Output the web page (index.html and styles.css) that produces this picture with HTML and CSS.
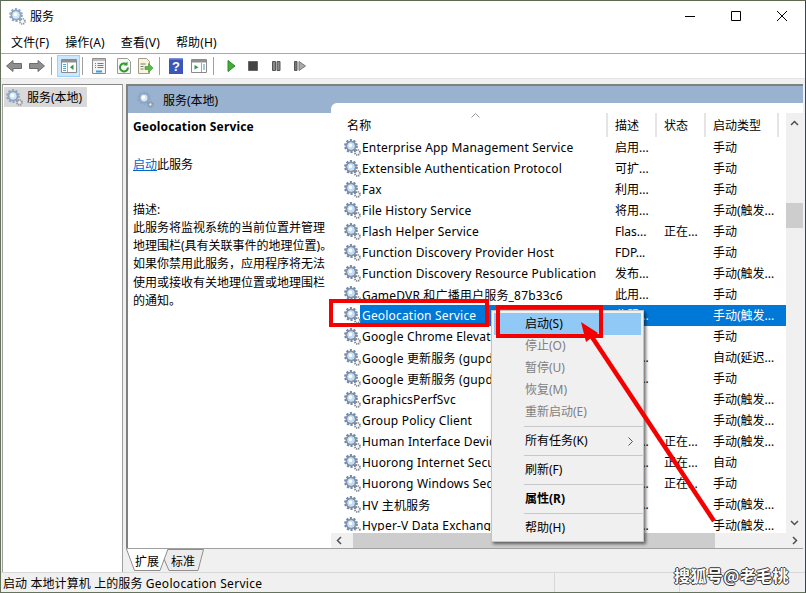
FILE: index.html
```html
<!DOCTYPE html>
<html lang="zh-CN">
<head>
<meta charset="utf-8">
<title>服务</title>
<link rel="stylesheet" href="styles.css">
</head>
<body>
<svg class="defs" width="0" height="0" aria-hidden="true">
  <symbol id="gear" viewBox="0 0 17 17">
    <circle cx="7" cy="7" r="5.6" fill="none" stroke="#6f85a2" stroke-width="2.6" stroke-dasharray="2 1.52"/>
    <circle cx="7" cy="7" r="4.5" fill="none" stroke="#7d94b1" stroke-width="2"/>
    <circle cx="7" cy="7" r="3.4" fill="#c9dcee"/>
    <circle cx="6.4" cy="6.4" r="1.8" fill="#fff"/>
    <circle cx="13.4" cy="13.4" r="2.5" fill="none" stroke="#7d848c" stroke-width="1.9" stroke-dasharray="1.2 .76"/>
    <circle cx="13.4" cy="13.4" r="1" fill="#eef1f4"/>
  </symbol>
  <symbol id="gearlight" viewBox="0 0 17 17">
    <circle cx="7" cy="7" r="5.6" fill="none" stroke="#8fa8c4" stroke-width="2.6" stroke-dasharray="2 1.52"/>
    <circle cx="7" cy="7" r="4.5" fill="none" stroke="#8aa6c4" stroke-width="2"/>
    <circle cx="7" cy="7" r="3.4" fill="#d5e5f3"/>
    <circle cx="6.4" cy="6.4" r="1.8" fill="#fff"/>
    <circle cx="13.4" cy="13.4" r="2.5" fill="none" stroke="#8f969e" stroke-width="1.9" stroke-dasharray="1.2 .76"/>
    <circle cx="13.4" cy="13.4" r="1" fill="#eef1f4"/>
  </symbol>
</svg>
<div class="window">
  <header class="titlebar">
    <svg class="title-icon"><use href="#gearlight"/></svg>
    <span class="title-text">服务</span>
    <div class="win-buttons">
      <svg width="12" height="12" viewBox="0 0 12 12"><path d="M1 6.500h10" stroke="#000" fill="none"/></svg>
      <svg width="12" height="12" viewBox="0 0 12 12"><path d="M1.500 1.500h9v9h-9z" stroke="#000" fill="none"/></svg>
      <svg width="12" height="12" viewBox="0 0 12 12"><path d="M1 1l10 10M11 1L1 11" stroke="#000" fill="none"/></svg>
    </div>
  </header>
  <nav class="menubar">
    <span>文件(F)</span><span>操作(A)</span><span>查看(V)</span><span>帮助(H)</span>
  </nav>
  <div class="toolbar">
    <svg class="t16" viewBox="0 0 16 16"><path d="M.5 8L7 2.500V5.500H15.500V10.500H7V13.500Z" fill="#8f8f8f" stroke="#6d6d6d"/></svg>
    <svg class="t16 tg7" viewBox="0 0 16 16"><path d="M15.500 8L9 2.500V5.500H.5V10.500H9V13.500Z" fill="#8f8f8f" stroke="#6d6d6d"/></svg>
    <i class="tsep s6"></i>
    <span class="tactive"><svg class="t16" viewBox="0 0 16 16"><path d="M.5 1.500h15v13H.5z" fill="#fff" stroke="#8a8a8a"/><path d="M1 2h14v2.500H1z" fill="#8f8f8f"/><path d="M2 6.500h3M2 8.500h3M2 10.500h3M2 12.500h3" stroke="#5fa0c8"/><path d="M6.500 5v9" stroke="#aaa"/><path d="M12.500 6.500v5.500l-3.500-2.750z" fill="#2d9a3e"/></svg></span>
    <i class="tsep s2"></i>
    <svg class="t16 tg8" viewBox="0 0 16 16"><path d="M1.500 .5h13v15h-13z" fill="#f4f4f4" stroke="#8c8c8c"/><path d="M2 1h12v2H2z" fill="#bbb"/><path d="M4 5.500h1M4 7.500h1M4 9.500h1M6.500 5.500h6M6.500 7.500h6M6.500 9.500h6" stroke="#6e7f90"/><path d="M5 13.500h6" stroke="#3aa0dc" stroke-width="2"/></svg>
    <svg class="t16 tg9" viewBox="0 0 16 16"><path d="M1.500 .5h10l3 3v12h-13z" fill="#f7f7f4" stroke="#9a9a9a"/><path d="M12 9.500a4 4 0 1 1-1.300-3" fill="none" stroke="#2f9b32" stroke-width="2"/><path d="M11.500 3.500v4h-4z" fill="#2f9b32"/></svg>
    <svg class="t16 tg5" viewBox="0 0 16 16"><path d="M1.500 .5h8l3 3v12h-11z" fill="#f8f4dd" stroke="#a29d86"/><path d="M3.500 6h5M3.500 8.500h3M3.500 11h3" stroke="#777"/><path d="M8 8.500h3.500V5.500L16 10l-4.500 4.500V11.500H8z" fill="#58b947" stroke="#3c8f32" stroke-width=".6"/></svg>
    <i class="tsep s6"></i>
    <svg class="t14 tg9" viewBox="0 0 14 16"><path d="M0 0h14v16H0z" fill="#3b56b8"/><path d="M0 0h14v1.500H0z" fill="#7f91d8"/><text x="7" y="13" font-size="13" font-weight="700" fill="#fff" text-anchor="middle" font-family="Liberation Sans">?</text></svg>
    <svg class="t16 tg8" viewBox="0 0 16 16"><path d="M.5 1.500h15v13H.5z" fill="#fff" stroke="#8a8a8a"/><path d="M1 2h14v2.500H1z" fill="#8f8f8f"/><path d="M10.500 5v9" stroke="#aaa"/><path d="M3.500 7v4.500l4-2.250z" fill="#2d9a3e"/><path d="M12 7h2M12 9h2M12 11h2" stroke="#5a8cc0"/></svg>
    <i class="tsep s6"></i>
    <svg class="t12 tg11" viewBox="0 0 12 16"><path d="M3 2.500L10 8l-7 5.500z" fill="#3fae35" stroke="#2c8a27"/></svg>
    <svg class="t12 tg10" viewBox="0 0 12 16"><path d="M1.500 3.500h9v9h-9z" fill="#444" stroke="#666"/></svg>
    <svg class="t12 tg11" viewBox="0 0 12 16"><path d="M2.500 3.500h3v9h-3zM7 3.500h3v9H7z" fill="#888" stroke="#555"/></svg>
    <svg class="t12 tg12" viewBox="0 0 12 16"><path d="M.5 3.500h2.500v9H.5z" fill="#777" stroke="#555"/><path d="M5 3.500L11.500 8 5 12.500z" fill="#aaa" stroke="#777"/></svg>
  </div>
  <main class="workspace">
    <aside class="tree">
      <div class="tree-item"><svg class="gear"><use href="#gearlight"/></svg><span>服务(本地)</span></div>
    </aside>
    <section class="content">
      <div class="content-frame">
        <div class="band"><svg class="gear"><use href="#gearlight"/></svg><span>服务(本地)</span></div>
        <div class="split">
          <div class="details">
            <h1>Geolocation Service</h1>
            <p class="start"><a href="#">启动</a>此服务</p>
            <p class="desc-label">描述:</p>
            <p class="desc-text">此服务将监视系统的当前位置并管理<br>地理围栏(具有关联事件的地理位置)。<br>如果你禁用此服务，应用程序将无法<br>使用或接收有关地理位置或地理围栏<br>的通知。</p>
          </div>
          <div class="list-area">
            <div class="list-main">
              <div class="table">
                <div class="row head">
                  <span class="c1">名称<svg class="sort" width="9" height="5" viewBox="0 0 9 5"><path d="M.5 4.500l4-4 4 4" fill="none" stroke="#999"/></svg></span>
                  <span class="c2">描述</span><span class="c3">状态</span><span class="c4">启动类型</span><span class="c5"></span>
                </div>
                <div class="rows">
                  <div class="row"><span class="c1"><svg class="gear"><use href="#gear"/></svg>Enterprise App Management Service</span><span class="c2">启用...</span><span class="c3"></span><span class="c4">手动</span></div>
                  <div class="row"><span class="c1"><svg class="gear"><use href="#gear"/></svg>Extensible Authentication Protocol</span><span class="c2">可扩...</span><span class="c3"></span><span class="c4">手动</span></div>
                  <div class="row"><span class="c1"><svg class="gear"><use href="#gear"/></svg>Fax</span><span class="c2">利用...</span><span class="c3"></span><span class="c4">手动</span></div>
                  <div class="row"><span class="c1"><svg class="gear"><use href="#gear"/></svg>File History Service</span><span class="c2">将用...</span><span class="c3"></span><span class="c4">手动(触发...</span></div>
                  <div class="row"><span class="c1"><svg class="gear"><use href="#gear"/></svg>Flash Helper Service</span><span class="c2">Flas...</span><span class="c3">正在...</span><span class="c4">手动</span></div>
                  <div class="row"><span class="c1"><svg class="gear"><use href="#gear"/></svg>Function Discovery Provider Host</span><span class="c2">FDP...</span><span class="c3"></span><span class="c4">手动</span></div>
                  <div class="row"><span class="c1"><svg class="gear"><use href="#gear"/></svg>Function Discovery Resource Publication</span><span class="c2">发布...</span><span class="c3"></span><span class="c4">手动(触发...</span></div>
                  <div class="row"><span class="c1"><svg class="gear"><use href="#gear"/></svg>GameDVR 和广播用户服务_87b33c6</span><span class="c2">此用...</span><span class="c3"></span><span class="c4">手动</span></div>
                  <div class="row selected"><span class="c1"><svg class="gear"><use href="#gear"/></svg>Geolocation Service</span><span class="c2">此服...</span><span class="c3"></span><span class="c4">手动(触发...</span></div>
                  <div class="row"><span class="c1"><svg class="gear"><use href="#gear"/></svg>Google Chrome Elevation Service</span><span class="c2"></span><span class="c3"></span><span class="c4">手动</span></div>
                  <div class="row"><span class="c1"><svg class="gear"><use href="#gear"/></svg>Google 更新服务 (gupdate)</span><span class="c2">请确...</span><span class="c3"></span><span class="c4">自动(延迟...</span></div>
                  <div class="row"><span class="c1"><svg class="gear"><use href="#gear"/></svg>Google 更新服务 (gupdatem)</span><span class="c2">请确...</span><span class="c3"></span><span class="c4">手动</span></div>
                  <div class="row"><span class="c1"><svg class="gear"><use href="#gear"/></svg>GraphicsPerfSvc</span><span class="c2"></span><span class="c3"></span><span class="c4">手动(触发...</span></div>
                  <div class="row"><span class="c1"><svg class="gear"><use href="#gear"/></svg>Group Policy Client</span><span class="c2"></span><span class="c3"></span><span class="c4">手动(触发...</span></div>
                  <div class="row"><span class="c1"><svg class="gear"><use href="#gear"/></svg>Human Interface Device Service</span><span class="c2">激活...</span><span class="c3">正在...</span><span class="c4">手动(触发...</span></div>
                  <div class="row"><span class="c1"><svg class="gear"><use href="#gear"/></svg>Huorong Internet Security</span><span class="c2">火绒...</span><span class="c3">正在...</span><span class="c4">自动</span></div>
                  <div class="row"><span class="c1"><svg class="gear"><use href="#gear"/></svg>Huorong Windows Security</span><span class="c2">火绒...</span><span class="c3">正在...</span><span class="c4">手动</span></div>
                  <div class="row"><span class="c1"><svg class="gear"><use href="#gear"/></svg>HV 主机服务</span><span class="c2">为 H...</span><span class="c3"></span><span class="c4">手动(触发...</span></div>
                  <div class="row"><span class="c1"><svg class="gear"><use href="#gear"/></svg>Hyper-V Data Exchange</span><span class="c2">提供...</span><span class="c3"></span><span class="c4">手动(触发...</span></div>
                </div>
              </div>
              <div class="vscroll">
                <svg width="9" height="6" viewBox="0 0 9 6"><path d="M1 5l3.500-3.500L8 5" fill="none" stroke="#505050" stroke-width="1.500"/></svg>
                <div class="vtrack"><div class="vthumb"></div></div>
                <svg width="9" height="6" viewBox="0 0 9 6"><path d="M1 1l3.500 3.500L8 1" fill="none" stroke="#505050" stroke-width="1.500"/></svg>
              </div>
            </div>
            <div class="hscroll">
              <svg width="6" height="9" viewBox="0 0 6 9"><path d="M5 1L1.500 4.500 5 8" fill="none" stroke="#505050" stroke-width="1.500"/></svg>
              <div class="htrack"><div class="hthumb"></div></div>
              <svg width="6" height="9" viewBox="0 0 6 9"><path d="M1 1l3.500 3.500L1 8" fill="none" stroke="#505050" stroke-width="1.500"/></svg>
            </div>
          </div>
        </div>
      </div>
      <div class="tabs">
        <svg class="tab-shape" width="80" height="23" viewBox="0 0 80 23">
          <path d="M38 10L43 21.500H72L77.500 .5H42" fill="#ececec" stroke="#8e8e8e"/>
          <path d="M.5 0L8.500 21.500H34L42 0" fill="#fff" stroke="#8e8e8e"/>
        </svg>
        <span class="tab tab-a">扩展</span><span class="tab">标准</span>
      </div>
    </section>
  </main>
  <footer class="statusbar"><span>启动 本地计算机 上的服务 <b>Geolocation Service</b></span><i></i><i></i></footer>
</div>

<div class="menu">
  <div class="mi active">启动(S)</div>
  <div class="mi off">停止(O)</div>
  <div class="mi off">暂停(U)</div>
  <div class="mi off">恢复(M)</div>
  <div class="mi off">重新启动(E)</div>
  <hr>
  <div class="mi sub">所有任务(K)<svg width="5" height="9" viewBox="0 0 5 9"><path d="M.5.5l4 4-4 4" fill="none" stroke="#555"/></svg></div>
  <hr>
  <div class="mi">刷新(F)</div>
  <hr>
  <div class="mi strong">属性(R)</div>
  <hr>
  <div class="mi">帮助(H)</div>
</div>

<div class="mark mark-a"></div>
<div class="mark mark-b"></div>
<svg class="pointer" width="806" height="593" viewBox="0 0 806 593">
  <path d="M714 521L590 334" stroke="#f50000" stroke-width="4.500" fill="none"/>
  <path d="M581 322L598 333 586 342Z" fill="#f50000"/>
</svg>
<div class="watermark">搜狐号@老毛桃</div>
</body>
</html>
```
FILE: styles.css
```css
* { box-sizing: border-box; }
html, body { margin: 0; padding: 0; }
body {
  width: 806px; height: 593px; overflow: hidden; position: relative; background: #fff;
  font-family: "Noto Sans", "Noto Sans CJK SC", sans-serif; font-size: 12px; color: #000;
}
.defs { position: absolute; }
.window {
  width: 806px; height: 593px; display: flex; flex-direction: column;
  border: 1px solid #66735c; border-top-color: #5d6a52; border-right-color: #3a4450; background: #f0f0f0;
}
.titlebar { height: 30px; flex: none; background: #fff; display: flex; align-items: center; padding-left: 8px; }
.title-icon { width: 17px; height: 17px; }
.title-text { margin-left: 4px; }
.win-buttons { margin-left: auto; display: flex; gap: 34px; padding-right: 17px; }
.menubar { height: 23px; flex: none; background: #fff; display: flex; align-items: center; gap: 16px; padding-left: 10px; border-bottom: 1px solid #a8a8a8; letter-spacing: .15px; }
.toolbar { height: 24px; flex: none; background: #fff; display: flex; align-items: center; padding-left: 5px; }
.t16 { width: 16px; height: 16px; flex: none; }
.t14 { width: 14px; height: 16px; flex: none; }
.t12 { width: 12px; height: 16px; flex: none; }
.tg5 { margin-left: 5px; }
.tg7 { margin-left: 7px; }
.tg8 { margin-left: 8px; }
.tg9 { margin-left: 9px; }
.tg10 { margin-left: 10px; }
.tg11 { margin-left: 11px; }
.tg12 { margin-left: 12px; }
.tsep { width: 1px; height: 18px; background: #a0a0a0; flex: none; }
.s6 { margin-left: 6px; }
.s2 { margin-left: 2px; }
.tactive { width: 23px; height: 22px; margin-left: 5px; background: #cce8ff; border: 1px solid #99d1ff; display: flex; align-items: center; justify-content: center; flex: none; }
.workspace { flex: 1; min-height: 0; display: flex; padding-top: 5px; border-top: 1px solid #e3e3e3; gap: 3px; }
.tree { width: 121px; margin-left: 1px; background: #fff; border: 1px solid #a0a0a0; border-top: 1px solid #888; border-bottom: 0; padding: 2px 1px; flex: none; }
.tree-item { display: flex; align-items: center; background: #d9d9d9; height: 20px; width: 83px; padding-left: 2px; }
.tree-item span { margin-left: 4px; }
.gear { width: 17px; height: 17px; flex: none; }
.content { flex: 1; min-width: 0; display: flex; flex-direction: column; margin-right: 2px; }
.content-frame { flex: 1; min-height: 0; display: flex; flex-direction: column; background: #fff; border: 2px solid #808080; border-width: 2px 0 0 2px; }
.band { height: 27px; flex: none; background: #98b2cf; display: flex; align-items: center; padding-left: 9px; }
.band span { margin-left: 9px; }
.split { flex: 1; min-height: 0; display: flex; }
.details { width: 203px; flex: none; padding: 5px 5px; line-height: 17px; }
.details h1 { font-size: 12px; font-weight: 700; margin: 0; line-height: 17px; letter-spacing: .15px; }
.details p { margin: 0; }
.details .start { margin-top: 21px; }
.start a { color: #0066cc; }
.details .desc-label { margin-top: 28px; }
.details .desc-text { line-height: 18.2px; margin-top: 1px; white-space: nowrap; }
.list-area { flex: 1; min-width: 0; display: flex; flex-direction: column; background: #fff; margin-top: -10px; border-top-left-radius: 6px; }
.list-main { flex: 1; min-height: 0; display: flex; }
.table { flex: 1; min-width: 0; overflow: hidden; padding-top: 10px; }
.row { display: grid; grid-template-columns: 277px 49px 49px 73px 1fr; height: 21px; align-items: center; white-space: nowrap; }
.row > span { overflow: hidden; display: flex; align-items: center; height: 100%; }
.row.head { height: 24px; }
.row.head > span { border-right: 2px solid #e5e5e5; padding: 0 0 1px 7px; height: 24px; position: relative; }
.row.head .c1 { padding-left: 16px; }
.row.head .c5 { border: 0; }
.sort { position: absolute; left: 140px; top: 0; }
.rows { height: 394px; overflow: hidden; }
.row .c1 { gap: 1px; padding-left: 13px; letter-spacing: .18px; }
.row .c2, .row .c3, .row .c4 { padding: 0 0 1px 7px; }
.selected { background: linear-gradient(90deg, #fff 29px, #0078d7 29px); color: #fff; }
.vscroll { width: 17px; flex: none; background: #f0f0f0; display: flex; flex-direction: column; align-items: center; padding: 7px 0; margin-top: 10px; }
.vtrack { flex: 1; width: 100%; padding-top: 77px; }
.vthumb { height: 25px; background: #cdcdcd; width: 100%; }
.hscroll { height: 15px; flex: none; background: #f0f0f0; display: flex; align-items: center; padding: 0 5px; }
.htrack { flex: 1; height: 100%; padding: 0 77px 0 11px; }
.hthumb { height: 100%; background: #cdcdcd; }
.tabs { height: 24px; flex: none; position: relative; display: flex; background: #f0f0f0; border-top: 1px solid #a0a0a0; padding-left: 9px; align-items: center; }
.tab-shape { position: absolute; left: 0; top: 0; }
.tab { position: relative; width: 36px; }
.statusbar { height: 20px; flex: none; display: flex; align-items: center; background: #f0f0f0; border-top: 1px solid #d8d8d8; padding-left: 2px; }
.statusbar span { width: 584px; letter-spacing: .1px; }
.statusbar b { font-weight: 400; letter-spacing: .3px; }
.statusbar i { border-left: 1px solid #d8d8d8; height: 100%; width: 133px; }
.menu {
  position: absolute; left: 491px; top: 310px; width: 153px; height: 232px; background: #f0f0f0;
  border: 1px solid #c4c4c4; padding: 2px; box-shadow: 2px 2px 3px rgba(0,0,0,.55);
}
.mi { height: 22px; line-height: 22px; padding-left: 31px; position: relative; display: flex; align-items: center; }
.mi.active { background: #90c8f6; }
.mi.off { color: #7f7f7f; }
.mi.strong { font-weight: 700; }
.mi.sub svg { position: absolute; right: 8px; top: 7px; }
.menu hr { border: 0; border-top: 1px solid #c8c8c8; margin: 3px 0 3px 30px; width: 120px; height: 1px; }
.mark { position: absolute; border: 4px solid #f30000; }
.mark-a { left: 329px; top: 299px; width: 160px; height: 28px; }
.mark-b { left: 496px; top: 305px; width: 107px; height: 33px; }
.pointer { position: absolute; left: 0; top: 0; }
.watermark {
  position: absolute; left: 674px; top: 563px; color: #fff; font-size: 16px; font-weight: 700; letter-spacing: .4px;
  font-family: "Noto Sans CJK SC", sans-serif;
  text-shadow: -1px 0 #333, 1px 0 #333, 0 -1px #333, 0 1px #333;
}
```
